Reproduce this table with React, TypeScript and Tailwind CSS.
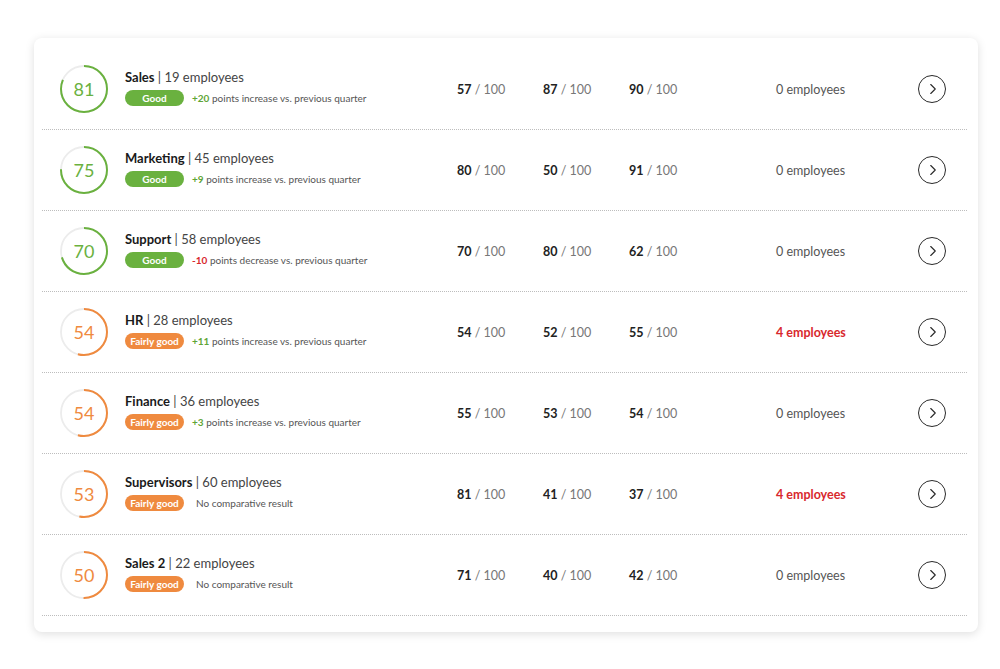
import React from 'react';
import { ChevronRight } from 'lucide-react';

type Dept = {
  name: string;
  count: number;
  score: number;
  level: 'good' | 'fair';
  change: number | null;
  a: number;
  b: number;
  c: number;
  risk: number;
};

const depts: Dept[] = [
  { name: 'Sales', count: 19, score: 81, level: 'good', change: 20, a: 57, b: 87, c: 90, risk: 0 },
  { name: 'Marketing', count: 45, score: 75, level: 'good', change: 9, a: 80, b: 50, c: 91, risk: 0 },
  { name: 'Support', count: 58, score: 70, level: 'good', change: -10, a: 70, b: 80, c: 62, risk: 0 },
  { name: 'HR', count: 28, score: 54, level: 'fair', change: 11, a: 54, b: 52, c: 55, risk: 4 },
  { name: 'Finance', count: 36, score: 54, level: 'fair', change: 3, a: 55, b: 53, c: 54, risk: 0 },
  { name: 'Supervisors', count: 60, score: 53, level: 'fair', change: null, a: 81, b: 41, c: 37, risk: 4 },
  { name: 'Sales 2', count: 22, score: 50, level: 'fair', change: null, a: 71, b: 40, c: 42, risk: 0 },
];

function Ring({ score, color }: { score: number; color: string }) {
  const r = 23;
  const len = 2 * Math.PI * r;
  return (
    <div className="relative w-[48px] h-[48px] shrink-0">
      <svg width="48" height="48" viewBox="0 0 48 48" className="-rotate-90">
        <circle cx="24" cy="24" r={r} fill="none" stroke="#ececec" strokeWidth="1.8" />
        <circle
          cx="24"
          cy="24"
          r={r}
          fill="none"
          stroke={color}
          strokeWidth="2"
          strokeDasharray={`${(len * score) / 100} ${len}`}
        />
      </svg>
      <span
        className="absolute inset-0 flex items-center justify-center text-[18px] font-normal"
        style={{ color }}
      >
        {score}
      </span>
    </div>
  );
}

function Score({ v }: { v: number }) {
  return (
    <div className="w-[86px] text-[12.5px] text-[#777] pt-[2px]">
      <span className="font-bold text-[#222]">{v}</span> / 100
    </div>
  );
}

function Row({ d }: { d: Dept }) {
  const good = d.level === 'good';
  const color = good ? '#6ab13f' : '#ef8a3f';
  return (
    <div className="flex items-center h-[81px] border-b border-dotted border-[#bdbdbd] pl-[18px]">
      <Ring score={d.score} color={color} />
      <div className="w-[349px] pl-[17px] -mt-[3px] flex flex-col gap-[5px]">
        <div className="text-[13px] text-[#444] leading-[16px]">
          <span className="font-bold text-[#1a1a1a]">{d.name}</span> | {d.count} employees
        </div>
        <div className="flex items-center gap-[8px]">
          <span
            className={`w-[59px] h-[16px] rounded-full text-white text-[10px] font-bold flex items-center justify-center ${good ? 'bg-[#6ab13f]' : 'bg-[#ef8a3f]'}`}
          >
            {good ? 'Good' : 'Fairly good'}
          </span>
          {d.change === null ? (
            <span className="text-[10px] text-[#555] pl-[4px]">No comparative result</span>
          ) : (
            <span className="text-[10px] text-[#555]">
              <span className={`font-bold ${d.change > 0 ? 'text-[#5fa536]' : 'text-[#d8282d]'}`}>
                {d.change > 0 ? `+${d.change}` : d.change}
              </span>{' '}
              points {d.change > 0 ? 'increase' : 'decrease'} vs. previous quarter
            </span>
          )}
        </div>
      </div>
      <Score v={d.a} />
      <Score v={d.b} />
      <Score v={d.c} />
      <div className="ml-[61px] w-[142px] text-[12.5px] pt-[2px]">
        {d.risk > 0 ? (
          <span className="font-bold text-[#d8282d]">{d.risk} employees</span>
        ) : (
          <span className="text-[#555]">0 employees</span>
        )}
      </div>
      <button className="w-[28px] h-[28px] rounded-full border-[1.5px] border-[#2a2a2a] flex items-center justify-center text-[#2a2a2a]">
        <ChevronRight className="w-[18px] h-[18px] ml-[1px]" strokeWidth={1.5} />
      </button>
    </div>
  );
}

export default function App() {
  return (
    <div className="w-[1000px] h-[669px] bg-white pt-[38px] pl-[34px]" style={{ fontFamily: 'Lato, "Open Sans", sans-serif' }}>
      <div className="w-[944px] bg-white rounded-[8px] shadow-[0_2px_10px_rgba(0,0,0,0.13)] pt-[11px] pb-[16px] pl-[8px] pr-[11px]">
        {depts.map(d => (
          <Row key={d.name} d={d} />
        ))}
      </div>
    </div>
  );
}
